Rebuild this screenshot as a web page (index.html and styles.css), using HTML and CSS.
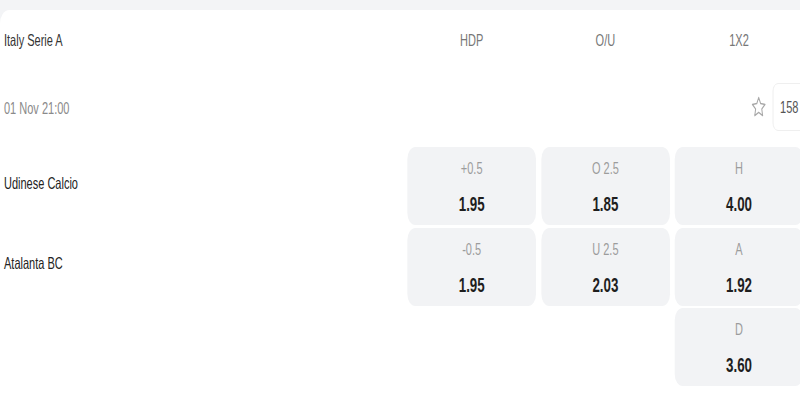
FILE: index.html
```html
<!DOCTYPE html>
<html>
<head>
<meta charset="utf-8">
<link rel="stylesheet" href="styles.css">
</head>
<body>
<div class="stage">
  <div class="card">
    <div class="grid head">
      <div class="league">Italy Serie A</div>
      <div class="col-title">HDP</div>
      <div class="col-title">O/U</div>
      <div class="col-title">1X2</div>
    </div>
    <div class="date-row">
      <div class="date">01 Nov 21:00</div>
      <div class="actions">
        <svg class="star" viewBox="0 0 24 24" width="26" height="24"><path d="M12 2.5l2.9 6.1 6.6.8-4.9 4.6 1.3 6.6L12 17.3l-5.9 3.3 1.3-6.6-4.9-4.6 6.6-.8z" fill="none" stroke="#a8a8a8" stroke-width="1.5" stroke-linejoin="round"/></svg>
        <div class="count">158</div>
      </div>
    </div>
    <div class="grid odds">
      <div class="team">Udinese Calcio</div>
      <div class="odd"><span class="lbl">+0.5</span><span class="val">1.95</span></div>
      <div class="odd"><span class="lbl">O 2.5</span><span class="val">1.85</span></div>
      <div class="odd"><span class="lbl">H</span><span class="val">4.00</span></div>

      <div class="team">Atalanta BC</div>
      <div class="odd"><span class="lbl">-0.5</span><span class="val">1.95</span></div>
      <div class="odd"><span class="lbl">U 2.5</span><span class="val">2.03</span></div>
      <div class="odd"><span class="lbl">A</span><span class="val">1.92</span></div>

      <div class="team"></div>
      <div class="empty"></div>
      <div class="empty"></div>
      <div class="odd"><span class="lbl">D</span><span class="val">3.60</span></div>
    </div>
  </div>
</div>
</body>
</html>
```

FILE: styles.css
```css
html, body {
  margin: 0;
  padding: 0;
  background: #f3f4f6;
  overflow: hidden;
  width: 800px;
  height: 400px;
}

.stage {
  width: 1216px;
  padding-top: 10px;
  transform: scaleX(0.6667);
  transform-origin: 0 0;
  font-family: "Liberation Sans", Arial, sans-serif;
}

.card {
  background: #ffffff;
  border-radius: 14px 0 0 0;
  height: 390px;
  padding: 0 11px 0 6px;
}

.grid {
  display: grid;
  grid-template-columns: 1fr 193px 193px 193px;
  column-gap: 7.5px;
}

.head {
  height: 60px;
  align-items: center;
}

.league {
  font-size: 16.5px;
  color: #333333;
}

.col-title {
  font-size: 16.5px;
  color: #777777;
  text-align: center;
}

.date-row {
  margin-top: 13px;
  height: 48px;
  display: flex;
  align-items: center;
  justify-content: space-between;
}

.date {
  font-size: 16.5px;
  color: #8a8a8a;
  padding-top: 2px;
}

.actions {
  display: flex;
  align-items: center;
  gap: 8px;
  height: 48px;
  margin-right: -3.5px;
}

.star {
  display: block;
}

.count {
  height: 46px;
  display: flex;
  align-items: center;
  padding: 0 10px;
  border: 1px solid #ececec;
  border-radius: 8px;
  font-size: 16.5px;
  color: #555555;
}

.odds {
  margin-top: 16px;
  grid-auto-rows: 78px;
  row-gap: 2.5px;
}

.team {
  font-size: 16.5px;
  color: #222222;
  align-self: center;
  padding-bottom: 6px;
}

.odd {
  background: #f2f3f5;
  border-radius: 12px;
  display: flex;
  flex-direction: column;
  align-items: center;
  padding-top: 11px;
  box-sizing: border-box;
}

.lbl {
  font-size: 16.5px;
  line-height: 20px;
  color: #9c9c9c;
}

.val {
  margin-top: 14px;
  font-size: 20px;
  line-height: 24px;
  font-weight: bold;
  color: #1e1e1e;
}
```
